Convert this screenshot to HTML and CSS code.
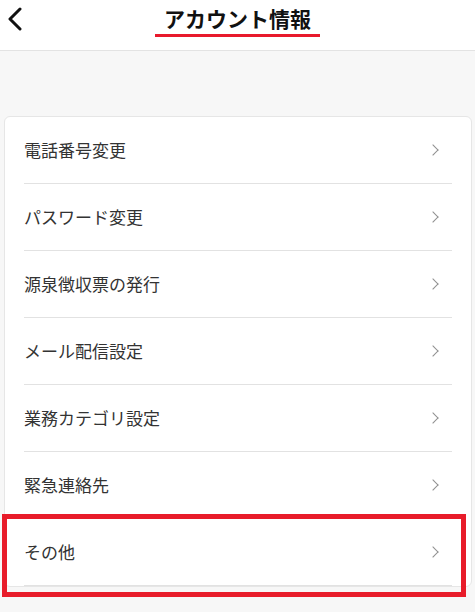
FILE: index.html
```html
<!DOCTYPE html>
<html lang="ja">
<head>
    <meta charset="UTF-8">
    <meta name="viewport" content="width=device-width, initial-scale=1.0">
    <title>アカウント情報</title>
    <link rel="stylesheet" href="styles.css">
</head>
<body>
    <header class="topbar">
        <a class="back" href="#">
            <svg width="16" height="24" viewBox="0 0 16 24"><path d="M13 2 L3 12 L13 22" fill="none" stroke="#111" stroke-width="3" stroke-linecap="round" stroke-linejoin="round"/></svg>
        </a>
        <h1 class="title">アカウント情報</h1>
    </header>
    <main class="content">
        <ul class="menu">
            <li class="item"><span>電話番号変更</span><i class="chev"></i></li>
            <li class="item"><span>パスワード変更</span><i class="chev"></i></li>
            <li class="item"><span>源泉徴収票の発行</span><i class="chev"></i></li>
            <li class="item"><span>メール配信設定</span><i class="chev"></i></li>
            <li class="item"><span>業務カテゴリ設定</span><i class="chev"></i></li>
            <li class="item"><span>緊急連絡先</span><i class="chev"></i></li>
            <li class="item"><span>その他</span><i class="chev"></i></li>
        </ul>
        <!-- 注釈の赤枠 -->
        <div class="mark"></div>
    </main>
</body>
</html>
```

FILE: styles.css
```css
*{
    box-sizing: border-box;
}

body{
    margin: 0;
    background-color: #f7f7f7;
    font-family: "Noto Sans CJK JP", "Noto Sans", sans-serif;
    color: #333;
}

.topbar{
    position: relative;
    height: 51px;
    background-color: #fff;
    border-bottom: 1px solid #e3e3e3;
    display: flex;
    justify-content: center;
}

.back{
    position: absolute;
    left: 7px;
    top: 7px;
    display: block;
    line-height: 0;
}

.title{
    margin: 0;
    padding: 4px 9px 0;
    height: 37px;
    font-size: 21px;
    font-weight: bold;
    color: #111;
    line-height: 29px;
    border-bottom: 3px solid #e8192c;
}

.content{
    position: relative;
    padding: 65px 3px 20px 4px;
}

.menu{
    list-style: none;
    margin: 0;
    padding: 0;
    background-color: #fff;
    border: 1px solid #e6e6e6;
    border-radius: 6px;
}

.item{
    height: 67px;
    margin: 0 19px;
    display: flex;
    align-items: center;
    justify-content: space-between;
    border-bottom: 1px solid #e2e2e2;
    font-size: 17px;
}

.item span{
    padding-bottom: 2px;
}

.chev{
    width: 8px;
    height: 8px;
    margin-right: 15px;
    border-top: 1.5px solid #8f8f8f;
    border-right: 1.5px solid #8f8f8f;
    transform: rotate(45deg);
}

.mark{
    position: absolute;
    left: 2px;
    top: 463px;
    width: 464px;
    height: 83px;
    border: 5px solid #e81c2a;
}
```
